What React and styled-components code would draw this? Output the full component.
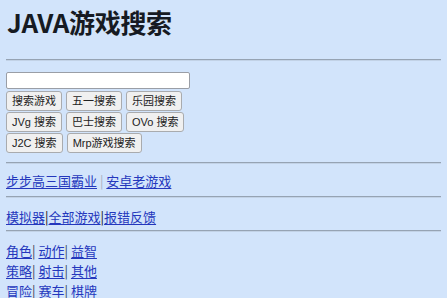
import React from "react";
import styled, { createGlobalStyle } from "styled-components";

const Global = createGlobalStyle`
  html, body { margin: 0; padding: 0; background: #d2e4fb; }
  body { font-family: "Liberation Sans", "Noto Sans CJK SC", sans-serif; color: #111; }
`;

const Page = styled.div`
  padding: 0 6px;
  display: flex;
  flex-direction: column;
  align-items: stretch;
`;

const Title = styled.h1`
  margin: 6px 0 0 1px;
  font-family: "Noto Sans CJK SC", sans-serif;
  font-weight: 700;
  font-size: 26px;
  line-height: 32px;
  color: #161a22;
  letter-spacing: -0.3px;
`;

const Rule = styled.div`
  height: 0;
  border-top: 1px solid #96a3b3;
  border-bottom: 1px solid #c2d2e6;
  margin-top: ${(p) => p.$top}px;
`;

const SearchInput = styled.input`
  box-sizing: border-box;
  margin-top: 11px;
  width: 184px;
  height: 17px;
  border: 1px solid #9a9ea6;
  border-radius: 2px;
  background: #fff;
  padding: 0 3px;
  outline: none;
`;

const ButtonGrid = styled.div`
  margin-top: 2px;
  display: flex;
  flex-direction: column;
  gap: 1px;
`;

const ButtonRow = styled.div`
  display: flex;
  gap: 4px;
`;

const Btn = styled.button`
  box-sizing: border-box;
  height: 20px;
  padding: 0 5px;
  font-family: "Liberation Sans", "Noto Sans CJK SC", sans-serif;
  font-size: 11px;
  color: #222;
  background: #f0f0f0;
  border: 1px solid #a9abae;
  border-radius: 3px;
  line-height: 18px;
`;

const LinkLine = styled.div`
  margin-top: ${(p) => p.$top || 0}px;
  font-size: 13px;
  line-height: 20px;
  font-family: "Noto Sans CJK SC", sans-serif;
  white-space: nowrap;
`;

const Link = styled.a`
  color: #2437bd;
  text-decoration: underline;
  text-underline-offset: 2px;
`;

const Sep = styled.span`
  color: ${(p) => p.$color || "#111"};
`;

const searchRows = [
  ["搜索游戏", "五一搜索", "乐园搜索"],
  ["JVg 搜索", "巴士搜索", "OVo 搜索"],
  ["J2C 搜索", "Mrp游戏搜索"],
];

const categories = [
  ["角色", "动作", "益智"],
  ["策略", "射击", "其他"],
  ["冒险", "赛车", "棋牌"],
];

export default function App() {
  return (
    <Page>
      <Global />
      <Title>JAVA游戏搜索</Title>
      <Rule $top={21} />
      <SearchInput type="text" />
      <ButtonGrid>
        {searchRows.map((row, i) => (
          <ButtonRow key={i}>
            {row.map((b) => (
              <Btn key={b}>{b}</Btn>
            ))}
          </ButtonRow>
        ))}
      </ButtonGrid>
      <Rule $top={9} />
      <LinkLine $top={7}>
        <Link href="#">步步高三国霸业</Link>
        <Sep $color="#a7b0bd"> | </Sep>
        <Link href="#">安卓老游戏</Link>
      </LinkLine>
      <Rule $top={5} />
      <LinkLine $top={9}>
        <Link href="#">模拟器</Link>
        <Sep>|</Sep>
        <Link href="#">全部游戏</Link>
        <Sep>|</Sep>
        <Link href="#">报错反馈</Link>
      </LinkLine>
      <Rule $top={3} />
      <LinkLine $top={9}>
        {categories.map((row, i) => (
          <div key={i}>
            {row.map((c, j) => (
              <React.Fragment key={c}>
                <Link href="#">{c}</Link>
                {j < row.length - 1 && <Sep $color="#3a4256">| </Sep>}
              </React.Fragment>
            ))}
          </div>
        ))}
      </LinkLine>
    </Page>
  );
}
